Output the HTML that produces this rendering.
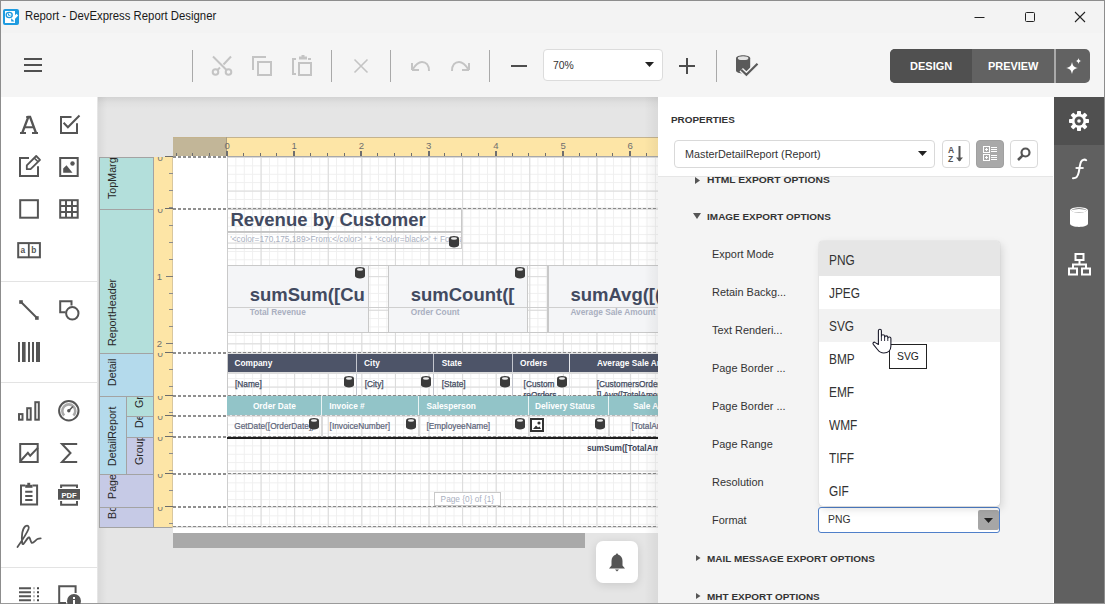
<!DOCTYPE html>
<html><head><meta charset="utf-8">
<style>
*{box-sizing:border-box;margin:0;padding:0}
html,body{width:1105px;height:604px;overflow:hidden;background:#f3f3f3;font-family:"Liberation Sans", sans-serif;color:#333}
.abs{position:absolute}
svg{position:absolute;overflow:visible}
.t{position:absolute;white-space:nowrap;line-height:1}
</style></head><body>

<div class="abs" style="left:0;top:0;width:1105px;height:604px;border:1px solid #8d8d8d;border-bottom-color:#9a9a9a"></div>
<svg style="left:0;top:0" width="30" height="30" viewBox="0 0 30 30">
<rect x="3" y="9" width="16" height="16" rx="2" fill="#1e9be0"/>
<rect x="5" y="11" width="10" height="12" fill="#fff"/>
<ellipse cx="9.2" cy="15" rx="3" ry="2.6" fill="none" stroke="#1e9be0" stroke-width="1.4"/>
<path d="M8.5 13.5V15.3H10.5" fill="none" stroke="#1e9be0" stroke-width="1"/>
<path d="M17.3 14.6L12.8 19.4" stroke="#fff" stroke-width="2.4"/>
<path d="M11.2 18.2V21.5H14.5Z" fill="#1e9be0"/>
</svg>
<div class="t" style="left:24.75px;top:8.50px;font-size:12.5px;font-weight:normal;color:#1a1a1a;line-height:normal;transform:scaleX(0.9086);transform-origin:0 0;">Report - DevExpress Report Designer</div>
<svg style="left:974px;top:11px" width="12" height="12"><path d="M0.5 6.5h10" stroke="#222" stroke-width="1"/></svg>
<svg style="left:1025px;top:12px" width="11" height="11"><rect x="0.5" y="0.5" width="9" height="9" rx="1" fill="none" stroke="#222" stroke-width="1"/></svg>
<svg style="left:1075px;top:12px" width="11" height="11"><path d="M0 0L10 10M10 0L0 10" stroke="#222" stroke-width="1.1"/></svg>
<div class="abs" style="left:1px;top:33px;width:1103px;height:64px;background:#f5f5f5"></div>
<div class="abs" style="left:24px;top:58px;width:18px;height:2px;background:#505050"></div>
<div class="abs" style="left:24px;top:64px;width:18px;height:2px;background:#505050"></div>
<div class="abs" style="left:24px;top:70px;width:18px;height:2px;background:#505050"></div>
<div class="abs" style="left:192px;top:50px;width:1px;height:32px;background:#a9a9a9"></div>
<div class="abs" style="left:331px;top:50px;width:1px;height:32px;background:#a9a9a9"></div>
<div class="abs" style="left:390px;top:50px;width:1px;height:32px;background:#a9a9a9"></div>
<div class="abs" style="left:489px;top:50px;width:1px;height:32px;background:#a9a9a9"></div>
<div class="abs" style="left:716px;top:50px;width:1px;height:32px;background:#a9a9a9"></div>
<svg style="left:212px;top:56px" width="20" height="20" viewBox="0 0 20 20" fill="none" stroke="#c4c4c4" stroke-width="2">
<circle cx="3.5" cy="16" r="2.8"/><circle cx="16.5" cy="16" r="2.8"/>
<path d="M1 0.5L14.5 14M19 0.5L11.5 8.5M5.5 14L8 11.5"/></svg>
<svg style="left:252px;top:56px" width="20" height="20" viewBox="0 0 20 20" fill="none" stroke="#c4c4c4" stroke-width="2">
<path d="M1 14V1h13"/><rect x="6" y="6" width="13" height="13"/></svg>
<svg style="left:292px;top:55px" width="20" height="21" viewBox="0 0 20 21" fill="none" stroke="#c4c4c4" stroke-width="2">
<path d="M4 19H1V4h3M16 4h3"/><rect x="7" y="8" width="12" height="12"/><path d="M7 3h8" stroke-width="3"/><path d="M9.5 1h3" stroke-width="2"/></svg>
<svg style="left:354px;top:59px" width="14" height="14" viewBox="0 0 14 14" fill="none" stroke="#c4c4c4" stroke-width="1.6"><path d="M0.5 0.5L13.5 13.5M13.5 0.5L0.5 13.5"/></svg>
<svg style="left:411px;top:60px" width="20" height="11" viewBox="0 0 20 11" fill="none" stroke="#c4c4c4" stroke-width="2"><path d="M1 10V3M1 10h7"/><path d="M1.5 9.5C5 4 8 2 11 2c4 0 7 3 7 9"/></svg>
<svg style="left:450px;top:60px" width="20" height="11" viewBox="0 0 20 11" fill="none" stroke="#c4c4c4" stroke-width="2"><path d="M19 10V3M19 10h-7"/><path d="M18.5 9.5C15 4 12 2 9 2c-4 0-7 3-7 9"/></svg>
<div class="abs" style="left:511px;top:65px;width:16px;height:2px;background:#4d4d4d"></div>
<div class="abs" style="left:543px;top:49px;width:120px;height:32px;background:#fff;border:1px solid #dcdcdc;border-radius:4px"></div>
<div class="t" style="left:553.00px;top:59.22px;font-size:11.5px;font-weight:normal;color:#333;line-height:normal;transform:scaleX(0.9039);transform-origin:0 0;">70%</div>
<svg style="left:645px;top:62px" width="9" height="5"><path d="M0 0h9L4.5 5z" fill="#222"/></svg>
<div class="abs" style="left:679px;top:65px;width:16px;height:2px;background:#4d4d4d"></div>
<div class="abs" style="left:686px;top:58px;width:2px;height:16px;background:#4d4d4d"></div>
<svg style="left:0;top:0" width="1105" height="604" viewBox="0 0 1105 604">
<path d="M736 58.2C736 54.2 750.2 54.2 750.2 58.2V70.5C750.2 74.5 736 74.5 736 70.5Z" fill="#5a5a5a"/>
<ellipse cx="743.1" cy="58.2" rx="5.3" ry="1.9" fill="#e3e3e3"/>
<path d="M741.2 69.8L746.4 74.8L757.5 63.8" fill="none" stroke="#f3f3f3" stroke-width="5"/>
<path d="M741.2 69.8L746.4 74.8L757.5 63.8" fill="none" stroke="#5a5a5a" stroke-width="2.2"/>
</svg>
<div class="abs" style="left:890px;top:49px;width:200px;height:34px;border-radius:5px;background:#626262;overflow:hidden"><div class="abs" style="left:0;top:0;width:82px;height:34px;background:#505050"></div><div class="abs" style="left:164px;top:0;width:2px;height:34px;background:#aaaaaa"></div></div>
<div class="t" style="left:910.00px;top:60.30px;font-size:11.2px;font-weight:bold;color:#fff;line-height:normal;transform:scaleX(0.9851);transform-origin:0 0;">DESIGN</div>
<div class="t" style="left:988.00px;top:60.30px;font-size:11.2px;font-weight:bold;color:#fff;line-height:normal;transform:scaleX(0.9777);transform-origin:0 0;">PREVIEW</div>
<svg style="left:1066px;top:58px" width="16" height="16" viewBox="0 0 16 16"><path d="M6 4C6.8 8 8 9.2 12 10C8 10.8 6.8 12 6 16C5.2 12 4 10.8 0 10C4 9.2 5.2 8 6 4Z" fill="#fff"/><path d="M12.5 0C12.9 2 13.5 2.6 15.5 3C13.5 3.4 12.9 4 12.5 6C12.1 4 11.5 3.4 9.5 3C11.5 2.6 12.1 2 12.5 0Z" fill="#fff"/></svg>
<div class="abs" style="left:1px;top:97px;width:96px;height:506px;background:#fff"></div>
<div class="abs" style="left:1px;top:281px;width:96px;height:1px;background:#e3e3e3"></div>
<div class="abs" style="left:1px;top:382px;width:96px;height:1px;background:#e3e3e3"></div>
<div class="abs" style="left:1px;top:567px;width:96px;height:1px;background:#e3e3e3"></div>
<svg style="left:0;top:0" width="1105" height="604" viewBox="0 0 1105 604" fill="none" stroke="#555" stroke-width="2"><path d="M22.2 133L28.3 117H30.1L36 133" stroke-width="2.3"/><path d="M20 133H26M32 133H38M24.3 127.3H33.7M26.2 117H30.3" stroke-width="2"/><path d="M71.5 117H61V133H77V123.3" /><path d="M63.6 122.7L67.9 127.2L79.5 115.5"/><path d="M29 158H20V176H38V166.2"/><path d="M26.8 169.2V165.4L36.2 156L40 159.8L30.6 169.2Z" stroke-width="1.8" stroke-linejoin="round"/><path d="M34.2 158L38 161.8" stroke-width="1.6"/><rect x="60.2" y="158" width="17.5" height="18"/><path d="M63.2 172.8V168.5L66.5 165.3L72.5 172.8Z" fill="#555" stroke="none"/><circle cx="72.5" cy="163.5" r="2.2" fill="#555" stroke="none"/><rect x="20.2" y="200.2" width="17.7" height="17.5"/><rect x="60.2" y="200.2" width="17.5" height="17.5"/><path d="M66 200.2V217.7M72 200.2V217.7M60.2 206.1H77.7M60.2 211.9H77.7"/><rect x="18.2" y="243.1" width="21.7" height="14.2" stroke-width="2"/><path d="M28.8 243.1V257.3" stroke-width="1.8"/><path d="M21 302L37 318"/><rect x="19.2" y="300.2" width="3.6" height="3.6" fill="#555" stroke="none"/><rect x="35.1" y="316.2" width="3.6" height="3.6" fill="#555" stroke="none"/><path d="M65.3 312.3H60.2V301.2H71.5V305.5"/><circle cx="72.3" cy="313.3" r="6.2"/><g fill="#555" stroke="none"><rect x="18" y="342" width="2" height="20"/><rect x="22" y="342" width="3.6" height="20"/><rect x="28" y="342" width="2" height="20"/><rect x="32" y="342" width="2" height="20"/><rect x="36" y="342" width="4" height="20"/></g><rect x="19" y="414.1" width="3.5" height="5.6"/><rect x="27.2" y="408.2" width="3.5" height="11.5"/><rect x="35.3" y="402.2" width="3.5" height="17.5"/><circle cx="68.8" cy="410.8" r="9.7"/><path d="M64.2 415.5A6.5 6.5 0 1 1 73.4 415.5" stroke="#aaa" stroke-width="2.6"/><path d="M68.8 410.8L73 406.5" stroke-width="1.6"/><circle cx="68.8" cy="410.8" r="1.7" fill="#555" stroke="none"/><rect x="20.2" y="444" width="17.5" height="18"/><path d="M20.5 461L27.9 452.8L30.2 455.8L38 447.6"/><path d="M77.2 444H62L70.5 453L62 462H77.2" /><path d="M25.2 485.6H21V504.5H37.1V485.6H32.5"/><rect x="25.2" y="484.8" width="7.3" height="3" fill="#555" stroke="none"/><rect x="27.3" y="482.8" width="2.9" height="2.2" fill="#555" stroke="none"/><path d="M25.2 491.8H32.5M25.2 495.9H32.5M25.2 499.9H32.5"/><path d="M61.1 488V485.4H77V488M61.1 500.9V504.7H77V500.9"/><rect x="58" y="489" width="22" height="10.7" fill="#555" stroke="none"/><path d="M17.5 547C21 542 27 533 28.5 529C29.5 526 27.5 524.8 25.3 526.3C22.5 528.5 21 536 22.3 543.5C23.5 546 25.5 540 28.5 537.5C30 536.5 30.3 541 31.5 542.5C33 544 35.5 540 37.5 539C38.5 538.5 39.8 538.3 40.7 538.3" stroke-width="1.8" stroke-linecap="round"/><path d="M19 588.3H31M19 592.3H31M19 596.3H31M19 600.3H31" stroke-width="2"/><path d="M33 588.3H35M33 592.3H35M33 596.3H35M33 600.3H35" stroke="#bbb" stroke-width="2"/><path d="M37 588.3H39M37 592.3H39M37 596.3H39M37 600.3H39" stroke="#444" stroke-width="2"/><path d="M66 603H59.2V586.2H75.6V593"/><circle cx="74" cy="601" r="7" fill="#555" stroke="none"/><rect x="73" y="597" width="2" height="2" fill="#fff" stroke="none"/><rect x="73" y="600" width="2" height="4" fill="#fff" stroke="none"/></svg>
<svg style="left:0;top:0" width="1105" height="604" viewBox="0 0 1105 604"><text x="20.5" y="253.3" font-size="8.4" font-weight="bold" fill="#555" font-family="Liberation Sans">a</text><text x="31.2" y="253.3" font-size="8.4" font-weight="bold" fill="#555" font-family="Liberation Sans">b</text><text x="69" y="498" font-size="7.6" font-weight="bold" text-anchor="middle" fill="#fff" font-family="Liberation Sans">PDF</text></svg>
<div class="abs" style="left:98px;top:97px;width:560px;height:506px;background:linear-gradient(#d3d3d3 0px,#e0e0e0 6px,#e5e5e5 12px,#e5e5e5 100%)"></div>
<div class="abs" style="left:97px;top:97px;width:10px;height:506px;background:linear-gradient(90deg,rgba(0,0,0,0.06),rgba(0,0,0,0))"></div>
<div class="abs" style="left:173px;top:137px;width:485px;height:20px;background:#fde5a6"></div>
<div class="abs" style="left:173px;top:137px;width:54px;height:20px;background:#c2b698"></div>
<div class="abs" style="left:173px;top:137px;width:485px;height:1px;background:#c4b38e"></div>
<div class="abs" style="left:226px;top:137px;width:1px;height:20px;background:#ab9f82"></div>
<div class="abs" style="left:175.6px;top:153px;width:1px;height:4px;background:#6e6e6e"></div><div class="abs" style="left:192.4px;top:153px;width:1px;height:4px;background:#6e6e6e"></div><div class="abs" style="left:209.2px;top:153px;width:1px;height:4px;background:#6e6e6e"></div><div class="abs" style="left:226.0px;top:151px;width:2px;height:6px;background:#6e6e6e"></div><div class="t" style="left:224.40px;top:140.37px;font-size:9.6px;font-weight:normal;color:#6f6f6f;line-height:normal;">0</div><div class="abs" style="left:242.8px;top:153px;width:1px;height:4px;background:#6e6e6e"></div><div class="abs" style="left:259.6px;top:153px;width:1px;height:4px;background:#6e6e6e"></div><div class="abs" style="left:276.4px;top:153px;width:1px;height:4px;background:#6e6e6e"></div><div class="abs" style="left:293.2px;top:151px;width:2px;height:6px;background:#6e6e6e"></div><div class="t" style="left:291.60px;top:140.37px;font-size:9.6px;font-weight:normal;color:#6f6f6f;line-height:normal;">1</div><div class="abs" style="left:310.0px;top:153px;width:1px;height:4px;background:#6e6e6e"></div><div class="abs" style="left:326.8px;top:153px;width:1px;height:4px;background:#6e6e6e"></div><div class="abs" style="left:343.6px;top:153px;width:1px;height:4px;background:#6e6e6e"></div><div class="abs" style="left:360.4px;top:151px;width:2px;height:6px;background:#6e6e6e"></div><div class="t" style="left:358.80px;top:140.37px;font-size:9.6px;font-weight:normal;color:#6f6f6f;line-height:normal;">2</div><div class="abs" style="left:377.2px;top:153px;width:1px;height:4px;background:#6e6e6e"></div><div class="abs" style="left:394.0px;top:153px;width:1px;height:4px;background:#6e6e6e"></div><div class="abs" style="left:410.8px;top:153px;width:1px;height:4px;background:#6e6e6e"></div><div class="abs" style="left:427.6px;top:151px;width:2px;height:6px;background:#6e6e6e"></div><div class="t" style="left:426.00px;top:140.37px;font-size:9.6px;font-weight:normal;color:#6f6f6f;line-height:normal;">3</div><div class="abs" style="left:444.4px;top:153px;width:1px;height:4px;background:#6e6e6e"></div><div class="abs" style="left:461.2px;top:153px;width:1px;height:4px;background:#6e6e6e"></div><div class="abs" style="left:478.0px;top:153px;width:1px;height:4px;background:#6e6e6e"></div><div class="abs" style="left:494.8px;top:151px;width:2px;height:6px;background:#6e6e6e"></div><div class="t" style="left:493.20px;top:140.37px;font-size:9.6px;font-weight:normal;color:#6f6f6f;line-height:normal;">4</div><div class="abs" style="left:511.6px;top:153px;width:1px;height:4px;background:#6e6e6e"></div><div class="abs" style="left:528.4px;top:153px;width:1px;height:4px;background:#6e6e6e"></div><div class="abs" style="left:545.2px;top:153px;width:1px;height:4px;background:#6e6e6e"></div><div class="abs" style="left:562.0px;top:151px;width:2px;height:6px;background:#6e6e6e"></div><div class="t" style="left:560.40px;top:140.37px;font-size:9.6px;font-weight:normal;color:#6f6f6f;line-height:normal;">5</div><div class="abs" style="left:578.8px;top:153px;width:1px;height:4px;background:#6e6e6e"></div><div class="abs" style="left:595.6px;top:153px;width:1px;height:4px;background:#6e6e6e"></div><div class="abs" style="left:612.4px;top:153px;width:1px;height:4px;background:#6e6e6e"></div><div class="abs" style="left:629.2px;top:151px;width:2px;height:6px;background:#6e6e6e"></div><div class="t" style="left:627.60px;top:140.37px;font-size:9.6px;font-weight:normal;color:#6f6f6f;line-height:normal;">6</div><div class="abs" style="left:646.0px;top:153px;width:1px;height:4px;background:#6e6e6e"></div>
<div class="abs" style="left:173px;top:157px;width:485px;height:376px;background:#fff"></div>
<div class="abs" style="left:227px;top:157px;width:431px;height:52px;background-image:linear-gradient(90deg,#dadada 1px,transparent 1px),linear-gradient(#dadada 1px,transparent 1px),linear-gradient(90deg,#efefef 1px,transparent 1px),linear-gradient(#efefef 1px,transparent 1px);background-size:33.6px 33.6px,33.6px 33.6px,8.4px 8.4px,8.4px 8.4px"></div>
<div class="abs" style="left:227px;top:209px;width:431px;height:144px;background-image:linear-gradient(90deg,#dadada 1px,transparent 1px),linear-gradient(#dadada 1px,transparent 1px),linear-gradient(90deg,#efefef 1px,transparent 1px),linear-gradient(#efefef 1px,transparent 1px);background-size:33.6px 33.6px,33.6px 33.6px,8.4px 8.4px,8.4px 8.4px"></div>
<div class="abs" style="left:227px;top:353px;width:431px;height:43px;background-image:linear-gradient(90deg,#dadada 1px,transparent 1px),linear-gradient(#dadada 1px,transparent 1px),linear-gradient(90deg,#efefef 1px,transparent 1px),linear-gradient(#efefef 1px,transparent 1px);background-size:33.6px 33.6px,33.6px 33.6px,8.4px 8.4px,8.4px 8.4px"></div>
<div class="abs" style="left:227px;top:396px;width:431px;height:20px;background-image:linear-gradient(90deg,#dadada 1px,transparent 1px),linear-gradient(#dadada 1px,transparent 1px),linear-gradient(90deg,#efefef 1px,transparent 1px),linear-gradient(#efefef 1px,transparent 1px);background-size:33.6px 33.6px,33.6px 33.6px,8.4px 8.4px,8.4px 8.4px"></div>
<div class="abs" style="left:227px;top:416px;width:431px;height:21px;background-image:linear-gradient(90deg,#dadada 1px,transparent 1px),linear-gradient(#dadada 1px,transparent 1px),linear-gradient(90deg,#efefef 1px,transparent 1px),linear-gradient(#efefef 1px,transparent 1px);background-size:33.6px 33.6px,33.6px 33.6px,8.4px 8.4px,8.4px 8.4px"></div>
<div class="abs" style="left:227px;top:437px;width:431px;height:37px;background-image:linear-gradient(90deg,#dadada 1px,transparent 1px),linear-gradient(#dadada 1px,transparent 1px),linear-gradient(90deg,#efefef 1px,transparent 1px),linear-gradient(#efefef 1px,transparent 1px);background-size:33.6px 33.6px,33.6px 33.6px,8.4px 8.4px,8.4px 8.4px"></div>
<div class="abs" style="left:227px;top:474px;width:431px;height:33px;background-image:linear-gradient(90deg,#dadada 1px,transparent 1px),linear-gradient(#dadada 1px,transparent 1px),linear-gradient(90deg,#efefef 1px,transparent 1px),linear-gradient(#efefef 1px,transparent 1px);background-size:33.6px 33.6px,33.6px 33.6px,8.4px 8.4px,8.4px 8.4px"></div>
<div class="abs" style="left:227px;top:507px;width:431px;height:20px;background-image:linear-gradient(90deg,#dadada 1px,transparent 1px),linear-gradient(#dadada 1px,transparent 1px),linear-gradient(90deg,#efefef 1px,transparent 1px),linear-gradient(#efefef 1px,transparent 1px);background-size:33.6px 33.6px,33.6px 33.6px,8.4px 8.4px,8.4px 8.4px"></div>
<div class="abs" style="left:227px;top:157px;width:1px;height:370px;background:#cfcfcf"></div>
<div class="abs" style="left:99px;top:157px;width:54px;height:52px;background:#b3dfdb;overflow:hidden"><div class="t" style="left:7.06px;top:42.40px;transform-origin:0 0;transform:rotate(-90deg);font-size:10.7px;color:#262626;line-height:normal">TopMargin</div></div>
<div class="abs" style="left:99px;top:209px;width:54px;height:144px;background:#b3dfdb;overflow:hidden"><div class="t" style="left:7.06px;top:136.50px;transform-origin:0 0;transform:rotate(-90deg);font-size:10.7px;color:#262626;line-height:normal">ReportHeader</div></div>
<div class="abs" style="left:99px;top:353px;width:54px;height:43px;background:#b4daec;overflow:hidden"><div class="t" style="left:7.06px;top:32.80px;transform-origin:0 0;transform:rotate(-90deg);font-size:10.7px;color:#262626;line-height:normal">Detail</div></div>
<div class="abs" style="left:99px;top:396px;width:27px;height:78px;background:#b4daec;overflow:hidden"><div class="t" style="left:7.06px;top:69.80px;transform-origin:0 0;transform:rotate(-90deg);font-size:10.7px;color:#262626;line-height:normal">DetailReport</div></div>
<div class="abs" style="left:126px;top:396px;width:27px;height:20px;background:#b3dfdb;overflow:hidden"><div class="t" style="left:6.56px;top:12.00px;transform-origin:0 0;transform:rotate(-90deg);font-size:10.7px;color:#262626;line-height:normal">GroupHeader1</div></div>
<div class="abs" style="left:126px;top:416px;width:27px;height:21px;background:#b4daec;overflow:hidden"><div class="t" style="left:6.56px;top:12.00px;transform-origin:0 0;transform:rotate(-90deg);font-size:10.7px;color:#262626;line-height:normal">Detail1</div></div>
<div class="abs" style="left:126px;top:437px;width:27px;height:37px;background:#c6cae6;overflow:hidden"><div class="t" style="left:6.56px;top:28.00px;transform-origin:0 0;transform:rotate(-90deg);font-size:10.7px;color:#262626;line-height:normal">GroupFooter1</div></div>
<div class="abs" style="left:99px;top:474px;width:54px;height:33px;background:#c6cae6;overflow:hidden"><div class="t" style="left:7.06px;top:25.00px;transform-origin:0 0;transform:rotate(-90deg);font-size:10.7px;color:#262626;line-height:normal">PageFooter</div></div>
<div class="abs" style="left:99px;top:507px;width:54px;height:20px;background:#c6cae6;overflow:hidden"><div class="t" style="left:7.06px;top:11.70px;transform-origin:0 0;transform:rotate(-90deg);font-size:10.7px;color:#262626;line-height:normal">BottomMargin</div></div>
<div class="abs" style="left:99px;top:157px;width:54px;height:1px;background:#a3a3a3"></div>
<div class="abs" style="left:99px;top:209px;width:54px;height:1px;background:#a3a3a3"></div>
<div class="abs" style="left:99px;top:353px;width:54px;height:1px;background:#a3a3a3"></div>
<div class="abs" style="left:99px;top:396px;width:54px;height:1px;background:#a3a3a3"></div>
<div class="abs" style="left:99px;top:474px;width:54px;height:1px;background:#a3a3a3"></div>
<div class="abs" style="left:99px;top:507px;width:54px;height:1px;background:#a3a3a3"></div>
<div class="abs" style="left:99px;top:527px;width:54px;height:1px;background:#a3a3a3"></div>
<div class="abs" style="left:126px;top:416px;width:27px;height:1px;background:#a3a3a3"></div>
<div class="abs" style="left:126px;top:437px;width:27px;height:1px;background:#a3a3a3"></div>
<div class="abs" style="left:99px;top:157px;width:1px;height:371px;background:#a3a3a3"></div>
<div class="abs" style="left:126px;top:396px;width:1px;height:78px;background:#a3a3a3"></div>
<div class="abs" style="left:153px;top:157px;width:1px;height:371px;background:#a3a3a3"></div>
<div class="abs" style="left:154px;top:157px;width:19px;height:371px;background:#fde5a6"></div>
<div class="abs" style="left:153px;top:527px;width:20px;height:1px;background:#a3a3a3"></div>
<div class="abs" style="left:172px;top:157px;width:1px;height:371px;background:#d9c79e"></div>
<div class="abs" style="left:165px;top:156px;width:8px;height:1px;background:#6a6a6a"></div><div class="abs" style="left:169px;top:173.3px;width:4px;height:1px;background:#8c8c8c"></div><div class="abs" style="left:169px;top:190.1px;width:4px;height:1px;background:#8c8c8c"></div><div class="abs" style="left:169px;top:206.9px;width:4px;height:1px;background:#8c8c8c"></div><div class="abs" style="left:154px;top:157px;width:10px;height:5px;overflow:hidden"><div class="t" style="left:3.40px;top:-4.63px;font-size:9.6px;font-weight:normal;color:#6f6f6f;line-height:normal;">0</div></div><div class="abs" style="left:165px;top:208px;width:8px;height:1px;background:#6a6a6a"></div><div class="abs" style="left:169px;top:225.3px;width:4px;height:1px;background:#8c8c8c"></div><div class="abs" style="left:169px;top:242.1px;width:4px;height:1px;background:#8c8c8c"></div><div class="abs" style="left:169px;top:258.9px;width:4px;height:1px;background:#8c8c8c"></div><div class="abs" style="left:166px;top:275.7px;width:7px;height:1px;background:#7a7a7a"></div><div class="t" style="left:156.80px;top:270.77px;font-size:9.6px;font-weight:normal;color:#6f6f6f;line-height:normal;">1</div><div class="abs" style="left:169px;top:292.5px;width:4px;height:1px;background:#8c8c8c"></div><div class="abs" style="left:169px;top:309.3px;width:4px;height:1px;background:#8c8c8c"></div><div class="abs" style="left:169px;top:326.1px;width:4px;height:1px;background:#8c8c8c"></div><div class="abs" style="left:166px;top:342.9px;width:7px;height:1px;background:#7a7a7a"></div><div class="t" style="left:156.80px;top:337.97px;font-size:9.6px;font-weight:normal;color:#6f6f6f;line-height:normal;">2</div><div class="abs" style="left:154px;top:209px;width:10px;height:5px;overflow:hidden"><div class="t" style="left:3.40px;top:-4.63px;font-size:9.6px;font-weight:normal;color:#6f6f6f;line-height:normal;">0</div></div><div class="abs" style="left:165px;top:352px;width:8px;height:1px;background:#6a6a6a"></div><div class="abs" style="left:169px;top:369.3px;width:4px;height:1px;background:#8c8c8c"></div><div class="abs" style="left:169px;top:386.1px;width:4px;height:1px;background:#8c8c8c"></div><div class="abs" style="left:154px;top:353px;width:10px;height:5px;overflow:hidden"><div class="t" style="left:3.40px;top:-4.63px;font-size:9.6px;font-weight:normal;color:#6f6f6f;line-height:normal;">0</div></div><div class="abs" style="left:165px;top:395px;width:8px;height:1px;background:#6a6a6a"></div><div class="abs" style="left:169px;top:412.3px;width:4px;height:1px;background:#8c8c8c"></div><div class="abs" style="left:154px;top:396px;width:10px;height:5px;overflow:hidden"><div class="t" style="left:3.40px;top:-4.63px;font-size:9.6px;font-weight:normal;color:#6f6f6f;line-height:normal;">0</div></div><div class="abs" style="left:165px;top:415px;width:8px;height:1px;background:#6a6a6a"></div><div class="abs" style="left:169px;top:432.3px;width:4px;height:1px;background:#8c8c8c"></div><div class="abs" style="left:154px;top:416px;width:10px;height:5px;overflow:hidden"><div class="t" style="left:3.40px;top:-4.63px;font-size:9.6px;font-weight:normal;color:#6f6f6f;line-height:normal;">0</div></div><div class="abs" style="left:165px;top:436px;width:8px;height:1px;background:#6a6a6a"></div><div class="abs" style="left:169px;top:453.3px;width:4px;height:1px;background:#8c8c8c"></div><div class="abs" style="left:169px;top:470.1px;width:4px;height:1px;background:#8c8c8c"></div><div class="abs" style="left:154px;top:437px;width:10px;height:5px;overflow:hidden"><div class="t" style="left:3.40px;top:-4.63px;font-size:9.6px;font-weight:normal;color:#6f6f6f;line-height:normal;">0</div></div><div class="abs" style="left:165px;top:473px;width:8px;height:1px;background:#6a6a6a"></div><div class="abs" style="left:169px;top:490.3px;width:4px;height:1px;background:#8c8c8c"></div><div class="abs" style="left:154px;top:474px;width:10px;height:5px;overflow:hidden"><div class="t" style="left:3.40px;top:-4.63px;font-size:9.6px;font-weight:normal;color:#6f6f6f;line-height:normal;">0</div></div><div class="abs" style="left:165px;top:506px;width:8px;height:1px;background:#6a6a6a"></div><div class="abs" style="left:169px;top:523.3px;width:4px;height:1px;background:#8c8c8c"></div><div class="abs" style="left:154px;top:507px;width:10px;height:5px;overflow:hidden"><div class="t" style="left:3.40px;top:-4.63px;font-size:9.6px;font-weight:normal;color:#6f6f6f;line-height:normal;">0</div></div>
<div class="abs" style="left:173px;top:156px;width:54px;height:2px;background:#e2e2e2"></div>
<div class="abs" style="left:173px;top:156px;width:54px;height:1px;background-image:linear-gradient(90deg,#8a8a8a 3px,transparent 3px);background-size:5px 1px"></div>
<div class="abs" style="left:173px;top:156px;width:54px;height:2px;background:#fff;background-image:linear-gradient(90deg,#8f8f8f 3px,transparent 3px);background-size:5px 2px"></div>
<div class="abs" style="left:173px;top:208px;width:485px;height:2px;background:#e2e2e2"></div>
<div class="abs" style="left:173px;top:208px;width:485px;height:1px;background-image:linear-gradient(90deg,#8a8a8a 3px,transparent 3px);background-size:5px 1px"></div>
<div class="abs" style="left:173px;top:208px;width:54px;height:2px;background:#fff;background-image:linear-gradient(90deg,#8f8f8f 3px,transparent 3px);background-size:5px 2px"></div>
<div class="abs" style="left:173px;top:352px;width:485px;height:2px;background:#e2e2e2"></div>
<div class="abs" style="left:173px;top:352px;width:485px;height:1px;background-image:linear-gradient(90deg,#8a8a8a 3px,transparent 3px);background-size:5px 1px"></div>
<div class="abs" style="left:173px;top:352px;width:54px;height:2px;background:#fff;background-image:linear-gradient(90deg,#8f8f8f 3px,transparent 3px);background-size:5px 2px"></div>
<div class="abs" style="left:173px;top:395px;width:485px;height:2px;background:#e2e2e2"></div>
<div class="abs" style="left:173px;top:395px;width:485px;height:1px;background-image:linear-gradient(90deg,#8a8a8a 3px,transparent 3px);background-size:5px 1px"></div>
<div class="abs" style="left:173px;top:395px;width:54px;height:2px;background:#fff;background-image:linear-gradient(90deg,#8f8f8f 3px,transparent 3px);background-size:5px 2px"></div>
<div class="abs" style="left:173px;top:415px;width:485px;height:2px;background:#e2e2e2"></div>
<div class="abs" style="left:173px;top:415px;width:485px;height:1px;background-image:linear-gradient(90deg,#8a8a8a 3px,transparent 3px);background-size:5px 1px"></div>
<div class="abs" style="left:173px;top:415px;width:54px;height:2px;background:#fff;background-image:linear-gradient(90deg,#8f8f8f 3px,transparent 3px);background-size:5px 2px"></div>
<div class="abs" style="left:173px;top:436px;width:485px;height:2px;background:#e2e2e2"></div>
<div class="abs" style="left:173px;top:436px;width:485px;height:1px;background-image:linear-gradient(90deg,#8a8a8a 3px,transparent 3px);background-size:5px 1px"></div>
<div class="abs" style="left:173px;top:436px;width:54px;height:2px;background:#fff;background-image:linear-gradient(90deg,#8f8f8f 3px,transparent 3px);background-size:5px 2px"></div>
<div class="abs" style="left:173px;top:473px;width:485px;height:2px;background:#e2e2e2"></div>
<div class="abs" style="left:173px;top:473px;width:485px;height:1px;background-image:linear-gradient(90deg,#8a8a8a 3px,transparent 3px);background-size:5px 1px"></div>
<div class="abs" style="left:173px;top:473px;width:54px;height:2px;background:#fff;background-image:linear-gradient(90deg,#8f8f8f 3px,transparent 3px);background-size:5px 2px"></div>
<div class="abs" style="left:173px;top:506px;width:485px;height:2px;background:#e2e2e2"></div>
<div class="abs" style="left:173px;top:506px;width:485px;height:1px;background-image:linear-gradient(90deg,#8a8a8a 3px,transparent 3px);background-size:5px 1px"></div>
<div class="abs" style="left:173px;top:506px;width:54px;height:2px;background:#fff;background-image:linear-gradient(90deg,#8f8f8f 3px,transparent 3px);background-size:5px 2px"></div>
<div class="abs" style="left:173px;top:526px;width:485px;height:2px;background:#e2e2e2"></div>
<div class="abs" style="left:173px;top:526px;width:485px;height:1px;background-image:linear-gradient(90deg,#8a8a8a 3px,transparent 3px);background-size:5px 1px"></div>
<div class="abs" style="left:227px;top:156px;width:431px;height:1px;background:#a8a8a8"></div>
<div class="abs" style="left:227px;top:209px;width:235px;height:24px;border:1px solid #c9c9c9;border-bottom:2px solid #c4c4c4"></div>
<div class="t" style="left:230.40px;top:209.48px;font-size:18.5px;font-weight:bold;color:#424a60;line-height:normal;">Revenue by Customer</div>
<div class="abs" style="left:227px;top:232px;width:235px;height:17px;border:1px solid #c9c9c9;overflow:hidden"><div class="t" style="left:2.20px;top:0.96px;font-size:8.3px;font-weight:normal;color:#aab0c0;line-height:normal;">&#x27;&lt;color=170,175,189&gt;From:&lt;/color&gt; &#x27; + &#x27;&lt;color=black&gt;&#x27; + Format</div></div>
<svg style="left:449px;top:235.5px" width="10" height="11.5" viewBox="0 0 10 11.5"><path d="M0 2.4C0 -0.7 10 -0.7 10 2.4V9.1C10 12.2 0 12.2 0 9.1Z" fill="#3b3b3b"/><ellipse cx="5" cy="2.5" rx="3.1" ry="1.2" fill="#ececec"/></svg>
<div class="abs" style="left:227px;top:265px;width:142px;height:68px;background:#f4f5f7;border:1px solid #c9c9c9;overflow:hidden"><div class="abs" style="left:0;top:41px;width:100%;height:1px;background:#cfcfcf"></div><div class="t" style="left:21.70px;top:17.58px;font-size:18.5px;font-weight:bold;color:#424a60;line-height:normal;">sumSum([Cu</div><div class="t" style="left:21.70px;top:41.06px;font-size:8.3px;font-weight:bold;color:#a9afc0;line-height:normal;">Total Revenue</div></div>
<svg style="left:355px;top:267px" width="10" height="11.5" viewBox="0 0 10 11.5"><path d="M0 2.4C0 -0.7 10 -0.7 10 2.4V9.1C10 12.2 0 12.2 0 9.1Z" fill="#3b3b3b"/><ellipse cx="5" cy="2.5" rx="3.1" ry="1.2" fill="#ececec"/></svg>
<div class="abs" style="left:388px;top:265px;width:140px;height:68px;background:#f4f5f7;border:1px solid #c9c9c9;overflow:hidden"><div class="abs" style="left:0;top:41px;width:100%;height:1px;background:#cfcfcf"></div><div class="t" style="left:21.70px;top:17.58px;font-size:18.5px;font-weight:bold;color:#424a60;line-height:normal;">sumCount([</div><div class="t" style="left:21.70px;top:41.06px;font-size:8.3px;font-weight:bold;color:#a9afc0;line-height:normal;">Order Count</div></div>
<svg style="left:515px;top:267px" width="10" height="11.5" viewBox="0 0 10 11.5"><path d="M0 2.4C0 -0.7 10 -0.7 10 2.4V9.1C10 12.2 0 12.2 0 9.1Z" fill="#3b3b3b"/><ellipse cx="5" cy="2.5" rx="3.1" ry="1.2" fill="#ececec"/></svg>
<div class="abs" style="left:548px;top:265px;width:153px;height:68px;background:#f4f5f7;border:1px solid #c9c9c9;overflow:hidden"><div class="abs" style="left:0;top:41px;width:100%;height:1px;background:#cfcfcf"></div><div class="t" style="left:21.40px;top:17.58px;font-size:18.5px;font-weight:bold;color:#424a60;line-height:normal;">sumAvg([(</div><div class="t" style="left:21.40px;top:41.06px;font-size:8.3px;font-weight:bold;color:#a9afc0;line-height:normal;">Average Sale Amount</div></div>
<div class="abs" style="left:368px;top:265px;width:21px;height:68px;border:1px solid #c9c9c9"><div class="abs" style="left:0;top:41px;width:100%;height:1px;background:#cfcfcf"></div></div>
<div class="abs" style="left:527px;top:265px;width:21px;height:68px;border:1px solid #c9c9c9"><div class="abs" style="left:0;top:41px;width:100%;height:1px;background:#cfcfcf"></div></div>
<div class="abs" style="left:227px;top:354px;width:431px;height:18px;background:#4d5468"></div>
<div class="abs" style="left:356px;top:354px;width:1px;height:42px;background:#c3c6ce"></div>
<div class="abs" style="left:433px;top:354px;width:1px;height:42px;background:#c3c6ce"></div>
<div class="abs" style="left:512px;top:354px;width:1px;height:42px;background:#c3c6ce"></div>
<div class="abs" style="left:569px;top:354px;width:1px;height:42px;background:#e6e8ec"></div>
<div class="t" style="left:234.50px;top:358.06px;font-size:8.3px;font-weight:bold;color:#fff;line-height:normal;">Company</div>
<div class="t" style="left:364.10px;top:358.06px;font-size:8.3px;font-weight:bold;color:#fff;line-height:normal;">City</div>
<div class="t" style="left:441.70px;top:358.06px;font-size:8.3px;font-weight:bold;color:#fff;line-height:normal;">State</div>
<div class="t" style="left:520.00px;top:358.06px;font-size:8.3px;font-weight:bold;color:#fff;line-height:normal;">Orders</div>
<div class="t" style="left:597.00px;top:358.06px;font-size:8.3px;font-weight:bold;color:#fff;line-height:normal;">Average Sale Amount</div>
<div class="abs" style="left:227px;top:372px;width:431px;height:2px;background:#dcdcdc"></div>
<div class="abs" style="left:227px;top:354px;width:1px;height:42px;background:#c9c9c9"></div>
<div class="t" style="left:235.00px;top:379.06px;font-size:8.3px;font-weight:normal;color:#424a60;line-height:normal;-webkit-text-stroke:0.25px #424a60">[Name]</div>
<div class="t" style="left:364.70px;top:379.06px;font-size:8.3px;font-weight:normal;color:#424a60;line-height:normal;-webkit-text-stroke:0.25px #424a60">[City]</div>
<div class="t" style="left:441.70px;top:379.06px;font-size:8.3px;font-weight:normal;color:#424a60;line-height:normal;-webkit-text-stroke:0.25px #424a60">[State]</div>
<div class="abs" style="left:513px;top:374px;width:56px;height:22px;overflow:hidden"><div class="t" style="left:10.60px;top:5.16px;font-size:8.3px;font-weight:normal;color:#424a60;line-height:normal;-webkit-text-stroke:0.25px #424a60">[Custom</div><div class="t" style="left:10.60px;top:15.66px;font-size:8.3px;font-weight:normal;color:#424a60;line-height:normal;-webkit-text-stroke:0.25px #424a60">reOrders.</div></div>
<div class="abs" style="left:570px;top:374px;width:88px;height:22px;overflow:hidden"><div class="t" style="left:26.70px;top:5.36px;font-size:8.3px;font-weight:normal;color:#424a60;line-height:normal;-webkit-text-stroke:0.25px #424a60">[CustomersOrders</div><div class="t" style="left:26.70px;top:15.86px;font-size:8.3px;font-weight:normal;color:#424a60;line-height:normal;-webkit-text-stroke:0.25px #424a60">[].Avg([TotalAmount])</div></div>
<svg style="left:344.2px;top:376.4px" width="10" height="11.5" viewBox="0 0 10 11.5"><path d="M0 2.4C0 -0.7 10 -0.7 10 2.4V9.1C10 12.2 0 12.2 0 9.1Z" fill="#3b3b3b"/><ellipse cx="5" cy="2.5" rx="3.1" ry="1.2" fill="#ececec"/></svg>
<svg style="left:421.1px;top:376.4px" width="10" height="11.5" viewBox="0 0 10 11.5"><path d="M0 2.4C0 -0.7 10 -0.7 10 2.4V9.1C10 12.2 0 12.2 0 9.1Z" fill="#3b3b3b"/><ellipse cx="5" cy="2.5" rx="3.1" ry="1.2" fill="#ececec"/></svg>
<svg style="left:500.2px;top:376.4px" width="10" height="11.5" viewBox="0 0 10 11.5"><path d="M0 2.4C0 -0.7 10 -0.7 10 2.4V9.1C10 12.2 0 12.2 0 9.1Z" fill="#3b3b3b"/><ellipse cx="5" cy="2.5" rx="3.1" ry="1.2" fill="#ececec"/></svg>
<svg style="left:557.4px;top:376.4px" width="10" height="11.5" viewBox="0 0 10 11.5"><path d="M0 2.4C0 -0.7 10 -0.7 10 2.4V9.1C10 12.2 0 12.2 0 9.1Z" fill="#3b3b3b"/><ellipse cx="5" cy="2.5" rx="3.1" ry="1.2" fill="#ececec"/></svg>
<div class="abs" style="left:227px;top:396px;width:431px;height:19px;background:#92c4c8"></div>
<div class="abs" style="left:227px;top:415px;width:431px;height:1px;background-image:linear-gradient(90deg,#b9b9b9 3px,#e8e8e8 3px);background-size:5px 1px"></div>
<div class="abs" style="left:321px;top:396px;width:1px;height:19px;background:#e9f3f4"></div>
<div class="abs" style="left:321px;top:416px;width:2px;height:21px;background:#dadada"></div>
<div class="abs" style="left:418px;top:396px;width:1px;height:19px;background:#e9f3f4"></div>
<div class="abs" style="left:418px;top:416px;width:2px;height:21px;background:#dadada"></div>
<div class="abs" style="left:527.5px;top:396px;width:1px;height:19px;background:#e9f3f4"></div>
<div class="abs" style="left:527.5px;top:416px;width:2px;height:21px;background:#dadada"></div>
<div class="abs" style="left:607.5px;top:396px;width:1px;height:19px;background:#e9f3f4"></div>
<div class="abs" style="left:607.5px;top:416px;width:2px;height:21px;background:#dadada"></div>
<div class="t" style="left:252.90px;top:401.26px;font-size:8.3px;font-weight:bold;color:#fff;line-height:normal;">Order Date</div>
<div class="t" style="left:329.20px;top:401.26px;font-size:8.3px;font-weight:bold;color:#fff;line-height:normal;">Invoice #</div>
<div class="t" style="left:426.50px;top:401.26px;font-size:8.3px;font-weight:bold;color:#fff;line-height:normal;">Salesperson</div>
<div class="t" style="left:535.00px;top:401.26px;font-size:8.3px;font-weight:bold;color:#fff;line-height:normal;">Delivery Status</div>
<div class="t" style="left:633.20px;top:401.26px;font-size:8.3px;font-weight:bold;color:#fff;line-height:normal;">Sale Amount</div>
<div class="t" style="left:234.20px;top:421.36px;font-size:8.3px;font-weight:normal;color:#5c6479;line-height:normal;-webkit-text-stroke:0.2px #5c6479">GetDate([OrderDate])</div>
<div class="t" style="left:329.60px;top:421.36px;font-size:8.3px;font-weight:normal;color:#5c6479;line-height:normal;-webkit-text-stroke:0.2px #5c6479">[InvoiceNumber]</div>
<div class="t" style="left:426.50px;top:421.36px;font-size:8.3px;font-weight:normal;color:#5c6479;line-height:normal;-webkit-text-stroke:0.2px #5c6479">[EmployeeName]</div>
<div class="t" style="left:631.50px;top:421.36px;font-size:8.3px;font-weight:normal;color:#5c6479;line-height:normal;-webkit-text-stroke:0.2px #5c6479">[TotalAmount]</div>
<svg style="left:309.1px;top:418.2px" width="10" height="11.5" viewBox="0 0 10 11.5"><path d="M0 2.4C0 -0.7 10 -0.7 10 2.4V9.1C10 12.2 0 12.2 0 9.1Z" fill="#3b3b3b"/><ellipse cx="5" cy="2.5" rx="3.1" ry="1.2" fill="#ececec"/></svg>
<svg style="left:406.3px;top:418.2px" width="10" height="11.5" viewBox="0 0 10 11.5"><path d="M0 2.4C0 -0.7 10 -0.7 10 2.4V9.1C10 12.2 0 12.2 0 9.1Z" fill="#3b3b3b"/><ellipse cx="5" cy="2.5" rx="3.1" ry="1.2" fill="#ececec"/></svg>
<svg style="left:515px;top:418.2px" width="10" height="11.5" viewBox="0 0 10 11.5"><path d="M0 2.4C0 -0.7 10 -0.7 10 2.4V9.1C10 12.2 0 12.2 0 9.1Z" fill="#3b3b3b"/><ellipse cx="5" cy="2.5" rx="3.1" ry="1.2" fill="#ececec"/></svg>
<svg style="left:595px;top:418.2px" width="10" height="11.5" viewBox="0 0 10 11.5"><path d="M0 2.4C0 -0.7 10 -0.7 10 2.4V9.1C10 12.2 0 12.2 0 9.1Z" fill="#3b3b3b"/><ellipse cx="5" cy="2.5" rx="3.1" ry="1.2" fill="#ececec"/></svg>
<svg style="left:530px;top:418px" width="14" height="14" viewBox="0 0 14 14"><rect x="1" y="1" width="12" height="12" fill="#fff" stroke="#333" stroke-width="2"/><path d="M3 11L6 7.5L8 9.5L9.5 8.5L11 11Z" fill="#333"/><circle cx="9" cy="5" r="1.6" fill="#333"/></svg>
<div class="abs" style="left:227px;top:437px;width:431px;height:2px;background:#1e1e1e"></div>
<div class="t" style="left:586.90px;top:443.36px;font-size:8.3px;font-weight:bold;color:#3a4256;line-height:normal;">sumSum([TotalAmount])</div>
<div class="abs" style="left:434px;top:492px;width:67px;height:14px;border:1px solid #c9c9c9;background:#fff"></div>
<div class="t" style="left:440.60px;top:494.36px;font-size:8.3px;font-weight:normal;color:#aab0c0;line-height:normal;">Page {0} of {1}</div>
<div class="abs" style="left:173px;top:533px;width:412px;height:15px;background:#a9a9a9"></div>
<div class="abs" style="left:596px;top:541px;width:42px;height:42px;background:#fff;border-radius:7px;box-shadow:0 2px 10px rgba(0,0,0,0.12)"></div>
<svg style="left:608px;top:552px" width="18" height="20" viewBox="0 0 18 20"><path d="M9 1.5C9.6 1.5 10 2 10 2.6C13 3.4 14.5 6 14.5 9V13.5L17 16.5H1L3.5 13.5V9C3.5 6 5 3.4 8 2.6C8 2 8.4 1.5 9 1.5Z" fill="#555"/><path d="M7 17.5H11L9 19.5Z" fill="#555"/></svg>
<div class="abs" style="left:644px;top:97px;width:14px;height:506px;background:linear-gradient(90deg,rgba(0,0,0,0),rgba(0,0,0,0.05))"></div>
<div class="abs" style="left:658px;top:97px;width:396px;height:506px;background:#f4f4f4"></div>
<div class="t" style="left:707.10px;top:174.35px;font-size:9.95px;font-weight:bold;color:#333;line-height:normal;transform:scaleX(1.0356);transform-origin:0 0;">HTML EXPORT OPTIONS</div>
<svg style="left:695px;top:177px" width="6" height="8"><path d="M0 0L5 3.5L0 7Z" fill="#555"/></svg>
<div class="abs" style="left:658px;top:97px;width:396px;height:80px;background:#fff;border-bottom:1px solid #e6e6e6"></div>
<div class="t" style="left:671.30px;top:113.95px;font-size:9.95px;font-weight:bold;color:#333;line-height:normal;transform:scaleX(0.9963);transform-origin:0 0;">PROPERTIES</div>
<div class="abs" style="left:674px;top:140px;width:261px;height:28px;background:#fff;border:1px solid #d9d9d9;border-radius:4px"></div>
<div class="t" style="left:684.50px;top:147.51px;font-size:11.4px;font-weight:normal;color:#333;line-height:normal;transform:scaleX(0.9484);transform-origin:0 0;">MasterDetailReport (Report)</div>
<svg style="left:918px;top:151px" width="9" height="5"><path d="M0 0h9L4.5 5z" fill="#222"/></svg>
<div class="abs" style="left:942px;top:140px;width:28px;height:28px;background:#fff;border:1px solid #d9d9d9;border-radius:4px"></div>
<svg style="left:948px;top:145px" width="16" height="18" viewBox="0 0 16 18"><text x="0" y="8" font-size="8.5" font-weight="bold" fill="#555" font-family="Liberation Sans">A</text><text x="0" y="17" font-size="8.5" font-weight="bold" fill="#555" font-family="Liberation Sans">Z</text><path d="M11.5 1V16" stroke="#555" stroke-width="2"/><path d="M8 12.5L11.5 16.5L15 12.5" fill="#555"/></svg>
<div class="abs" style="left:976px;top:140px;width:28px;height:28px;background:#a9a9a9;border:1px solid #a0a0a0;border-radius:4px"></div>
<svg style="left:983px;top:146px" width="15" height="15" viewBox="0 0 15 15" fill="none" stroke="#fff" stroke-width="1"><rect x="0.5" y="0.5" width="6" height="6"/><rect x="0.5" y="8.5" width="6" height="6"/><path d="M2 3.5H5M3.5 2V5M2 11.5H5M3.5 10V13M8 1.5H14M8 3.5H14M8 5.5H14M8 9.5H14M8 11.5H14M8 13.5H14"/></svg>
<div class="abs" style="left:1010px;top:140px;width:28px;height:28px;background:#fff;border:1px solid #d9d9d9;border-radius:4px"></div>
<svg style="left:1017px;top:147px" width="14" height="14" viewBox="0 0 14 14"><circle cx="8.5" cy="5.5" r="4" fill="none" stroke="#555" stroke-width="2.2"/><path d="M5.7 8.3L1 13" stroke="#555" stroke-width="2.5"/></svg>
<svg style="left:693px;top:213px" width="8" height="6"><path d="M0 0H8L4 6Z" fill="#555"/></svg>
<div class="t" style="left:707.10px;top:210.85px;font-size:9.95px;font-weight:bold;color:#333;line-height:normal;">IMAGE EXPORT OPTIONS</div>
<div class="t" style="left:712.30px;top:247.62px;font-size:11.5px;font-weight:normal;color:#333;line-height:normal;transform:scaleX(0.9500);transform-origin:0 0;">Export Mode</div>
<div class="t" style="left:712.30px;top:285.62px;font-size:11.5px;font-weight:normal;color:#333;line-height:normal;transform:scaleX(0.9500);transform-origin:0 0;">Retain Backg...</div>
<div class="t" style="left:712.30px;top:323.62px;font-size:11.5px;font-weight:normal;color:#333;line-height:normal;transform:scaleX(0.9500);transform-origin:0 0;">Text Renderi...</div>
<div class="t" style="left:712.30px;top:361.62px;font-size:11.5px;font-weight:normal;color:#333;line-height:normal;transform:scaleX(0.9500);transform-origin:0 0;">Page Border ...</div>
<div class="t" style="left:712.30px;top:399.62px;font-size:11.5px;font-weight:normal;color:#333;line-height:normal;transform:scaleX(0.9500);transform-origin:0 0;">Page Border ...</div>
<div class="t" style="left:712.30px;top:437.62px;font-size:11.5px;font-weight:normal;color:#333;line-height:normal;transform:scaleX(0.9500);transform-origin:0 0;">Page Range</div>
<div class="t" style="left:712.30px;top:475.62px;font-size:11.5px;font-weight:normal;color:#333;line-height:normal;transform:scaleX(0.9500);transform-origin:0 0;">Resolution</div>
<div class="t" style="left:712.30px;top:513.62px;font-size:11.5px;font-weight:normal;color:#333;line-height:normal;transform:scaleX(0.9500);transform-origin:0 0;">Format</div>
<div class="t" style="left:707.10px;top:552.85px;font-size:9.95px;font-weight:bold;color:#333;line-height:normal;">MAIL MESSAGE EXPORT OPTIONS</div>
<svg style="left:696px;top:555px" width="6" height="8"><path d="M0 0L4.5 3L0 6Z" fill="#555"/></svg>
<div class="t" style="left:707.10px;top:590.85px;font-size:9.95px;font-weight:bold;color:#333;line-height:normal;">MHT EXPORT OPTIONS</div>
<svg style="left:696px;top:593px" width="6" height="8"><path d="M0 0L4.5 3L0 6Z" fill="#555"/></svg>
<div class="abs" style="left:818px;top:507px;width:182px;height:26px;background:#fff;border:1px solid #4f7fc9;border-radius:3px"></div>
<div class="t" style="left:828.30px;top:513.42px;font-size:11.5px;font-weight:normal;color:#333;line-height:normal;transform:scaleX(0.9000);transform-origin:0 0;">PNG</div>
<div class="abs" style="left:978px;top:510px;width:21px;height:20px;background:#a6a6a6;border-radius:2px"></div>
<svg style="left:984px;top:518px" width="9" height="5"><path d="M0 0h9L4.5 5z" fill="#222"/></svg>
<div class="abs" style="left:819px;top:241px;width:181px;height:265px;background:#fff;border-radius:4px;box-shadow:2px 3px 8px rgba(0,0,0,0.13),0 0 1px rgba(0,0,0,0.25);overflow:hidden"><div class="abs" style="left:0;top:0;width:181px;height:35px;background:#e6e6e6"></div><div class="abs" style="left:0;top:68px;width:181px;height:33px;background:#f2f2f2"></div></div>
<div class="t" style="left:828.50px;top:252.70px;font-size:13.8px;font-weight:normal;color:#333;line-height:normal;transform:scaleX(0.8600);transform-origin:0 0;">PNG</div>
<div class="t" style="left:828.50px;top:285.70px;font-size:13.8px;font-weight:normal;color:#333;line-height:normal;transform:scaleX(0.8600);transform-origin:0 0;">JPEG</div>
<div class="t" style="left:828.50px;top:318.70px;font-size:13.8px;font-weight:normal;color:#333;line-height:normal;transform:scaleX(0.8600);transform-origin:0 0;">SVG</div>
<div class="t" style="left:828.50px;top:351.70px;font-size:13.8px;font-weight:normal;color:#333;line-height:normal;transform:scaleX(0.8600);transform-origin:0 0;">BMP</div>
<div class="t" style="left:828.50px;top:384.70px;font-size:13.8px;font-weight:normal;color:#333;line-height:normal;transform:scaleX(0.8600);transform-origin:0 0;">EMF</div>
<div class="t" style="left:828.50px;top:417.70px;font-size:13.8px;font-weight:normal;color:#333;line-height:normal;transform:scaleX(0.8600);transform-origin:0 0;">WMF</div>
<div class="t" style="left:828.50px;top:450.70px;font-size:13.8px;font-weight:normal;color:#333;line-height:normal;transform:scaleX(0.8600);transform-origin:0 0;">TIFF</div>
<div class="t" style="left:828.50px;top:483.70px;font-size:13.8px;font-weight:normal;color:#333;line-height:normal;transform:scaleX(0.8600);transform-origin:0 0;">GIF</div>
<div class="abs" style="left:889px;top:344px;width:38px;height:25px;background:#fff;border:1px solid #222"></div>
<div class="t" style="left:897.00px;top:349.92px;font-size:11.5px;font-weight:normal;color:#222;line-height:normal;transform:scaleX(0.9000);transform-origin:0 0;">SVG</div>
<svg style="left:872px;top:328px" width="22" height="27" viewBox="0 0 22 27">
<path d="M6.4 16.5V2.8C6.4 0.7 9.4 0.7 9.4 2.8V8.2C9.4 6.2 12.6 6.2 12.6 8.2V9.2C12.6 7.4 15.8 7.4 15.8 9.2V10.3C15.8 8.6 18.9 8.6 18.9 10.3V18C18.9 22 16.3 25 11.8 25C8.6 25 7 23.5 5.5 21.5L1.3 16.3C0.3 15 1.9 13.4 3.3 14.6Z" fill="#fff" stroke="#1b1b2b" stroke-width="1.1" stroke-linejoin="round"/>
<path d="M9.4 8.2V13M12.6 9.2V13M15.8 10.3V13" stroke="#1b1b2b" stroke-width="0.9"/></svg>
<div class="abs" style="left:1053px;top:97px;width:1px;height:506px;background:#fff"></div>
<div class="abs" style="left:1054px;top:97px;width:50px;height:506px;background:#606060"></div>
<div class="abs" style="left:1054px;top:97px;width:50px;height:48px;background:#505050"></div>
<svg style="left:1069px;top:111px" width="20" height="20" viewBox="-10 -10 20 20"><rect x="-2" y="-10" width="4" height="5" rx="0.7" transform="rotate(0)" fill="#fff"/><rect x="-2" y="-10" width="4" height="5" rx="0.7" transform="rotate(45)" fill="#fff"/><rect x="-2" y="-10" width="4" height="5" rx="0.7" transform="rotate(90)" fill="#fff"/><rect x="-2" y="-10" width="4" height="5" rx="0.7" transform="rotate(135)" fill="#fff"/><rect x="-2" y="-10" width="4" height="5" rx="0.7" transform="rotate(180)" fill="#fff"/><rect x="-2" y="-10" width="4" height="5" rx="0.7" transform="rotate(225)" fill="#fff"/><rect x="-2" y="-10" width="4" height="5" rx="0.7" transform="rotate(270)" fill="#fff"/><rect x="-2" y="-10" width="4" height="5" rx="0.7" transform="rotate(315)" fill="#fff"/><circle r="7.2" fill="#fff"/><circle r="4.5" fill="#505050"/><circle r="1.8" fill="#fff"/></svg>
<svg style="left:1068px;top:155px" width="22" height="28" viewBox="0 0 22 28"><path d="M18.2 5.2C17 4.3 14.5 4.3 13.2 6.5C12 8.5 11.6 13 10.8 17C10 21 9 23.3 5 23.2" fill="none" stroke="#fff" stroke-width="2" stroke-linecap="round"/><path d="M7.6 13H15.6" stroke="#fff" stroke-width="1.8"/></svg>
<svg style="left:1070px;top:207px" width="18" height="20" viewBox="0 0 18 20"><path d="M0 3.5C0 -1 18 -1 18 3.5V16.5C18 21 0 21 0 16.5Z" fill="#fff"/><ellipse cx="9" cy="3.5" rx="7.5" ry="2.2" fill="#606060"/><ellipse cx="9" cy="3.7" rx="7.5" ry="1.7" fill="#fff"/></svg>
<svg style="left:1068px;top:253px" width="23" height="23" viewBox="0 0 23 23" fill="none" stroke="#fff" stroke-width="2"><rect x="7.5" y="1" width="8" height="6"/><rect x="1" y="15.5" width="8" height="6"/><rect x="14" y="15.5" width="8" height="6"/><path d="M11.5 7V11.5M5 15.5V11.5H18V15.5"/></svg>
</body></html>
